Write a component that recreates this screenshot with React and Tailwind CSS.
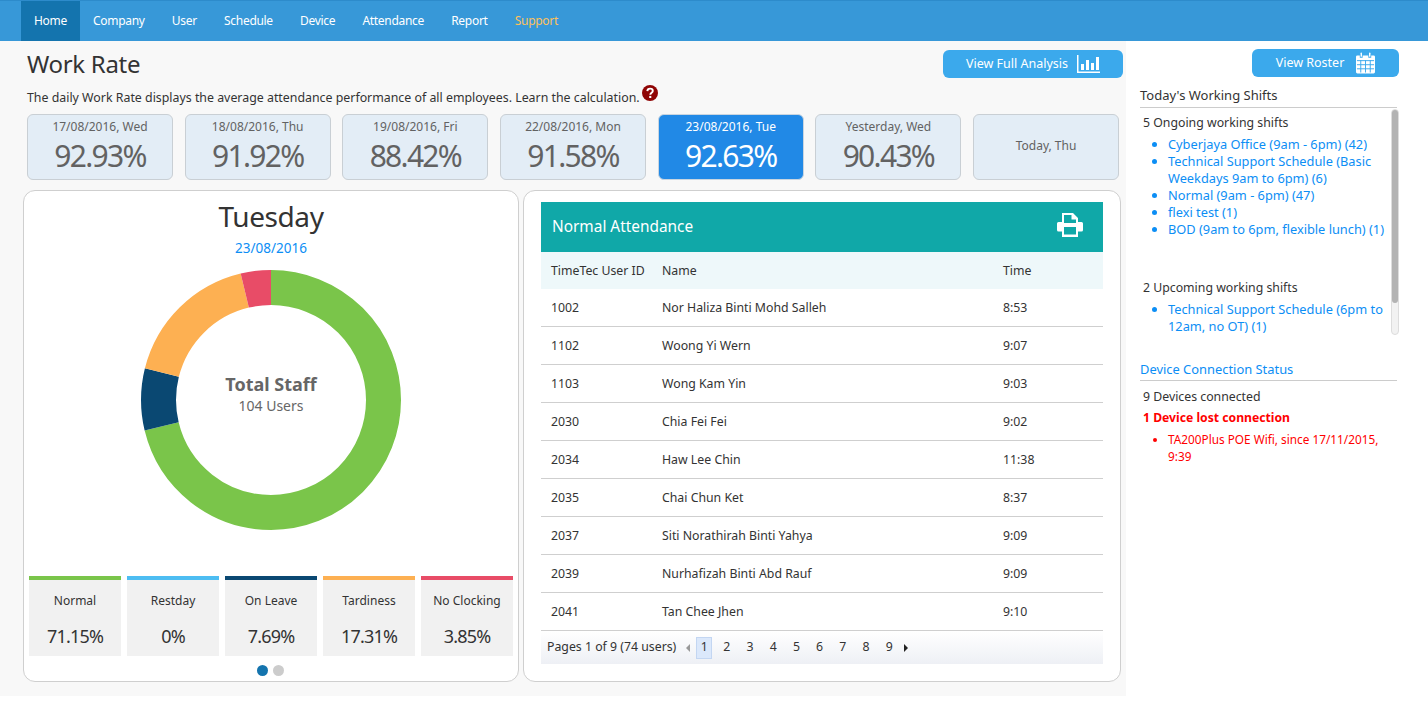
const navItems = ["Company", "User", "Schedule", "Device", "Attendance", "Report"];

const days = [
  { date: "17/08/2016, Wed", rate: "92.93%" },
  { date: "18/08/2016, Thu", rate: "91.92%" },
  { date: "19/08/2016, Fri", rate: "88.42%" },
  { date: "22/08/2016, Mon", rate: "91.58%" },
  { date: "23/08/2016, Tue", rate: "92.63%", active: true },
  { date: "Yesterday, Wed", rate: "90.43%" },
  { date: "Today, Thu" },
];

const legend = [
  { name: "Normal", value: 71.15, bar: "bg-[#7ac54a]", color: "#7ac54a" },
  { name: "Restday", value: 0, bar: "bg-[#4dbdf2]", color: "#4dbdf2" },
  { name: "On Leave", value: 7.69, bar: "bg-[#0a4872]", color: "#0a4872" },
  { name: "Tardiness", value: 17.31, bar: "bg-[#fdb052]", color: "#fdb052" },
  { name: "No Clocking", value: 3.85, bar: "bg-[#e84c67]", color: "#e84c67" },
];

const rows = [
  ["1002", "Nor Haliza Binti Mohd Salleh", "8:53"],
  ["1102", "Woong Yi Wern", "9:07"],
  ["1103", "Wong Kam Yin", "9:03"],
  ["2030", "Chia Fei Fei", "9:02"],
  ["2034", "Haw Lee Chin", "11:38"],
  ["2035", "Chai Chun Ket", "8:37"],
  ["2037", "Siti Norathirah Binti Yahya", "9:09"],
  ["2039", "Nurhafizah Binti Abd Rauf", "9:09"],
  ["2041", "Tan Chee Jhen", "9:10"],
];

function BarChartIcon() {
  return (
    <svg width="23" height="18" viewBox="0 0 23 18" fill="white">
      <rect x="0" y="0" width="1.500" height="18" />
      <rect x="0" y="16.500" width="23" height="1.500" />
      <rect x="4" y="9" width="3" height="6" />
      <rect x="9" y="5" width="3" height="10" />
      <rect x="14" y="8" width="3" height="7" />
      <rect x="19" y="2" width="3" height="13" />
    </svg>
  );
}

function CalendarIcon() {
  return (
    <svg width="19" height="22" viewBox="0 0 20 22" fill="white">
      <path d="M1.500 3H4v2.500h3V3h6v2.500h3V3h2.500A1.500 1.500 0 0 1 20 4.500V20.500A1.500 1.500 0 0 1 18.500 22H1.500A1.500 1.500 0 0 1 0 20.500V4.500A1.500 1.500 0 0 1 1.500 3Z" />
      <rect x="4.800" y="0" width="1.500" height="4.500" rx="0.700" />
      <rect x="13.700" y="0" width="1.500" height="4.500" rx="0.700" />
      <path
        d="M1 8.500H19M1 12.800H19M1 17.100H19M5 8V21M10 8V21M15 8V21"
        stroke="#3ba9ec"
        strokeWidth="1"
        fill="none"
      />
    </svg>
  );
}

function PrintIcon() {
  return (
    <svg width="26" height="24" viewBox="0 0 26 24" fill="white" className="-mt-[3px]">
      <path
        fillRule="evenodd"
        d="M5 0H16L21 5V9H24.500A1.500 1.500 0 0 1 26 10.500V17A1.500 1.500 0 0 1 24.500 18.500H21V24H5V18.500H1.500A1.500 1.500 0 0 1 0 17V10.500A1.500 1.500 0 0 1 1.500 9H5ZM7 2V10H19V6.500H14.500V2ZM7 14V21.500H19V14Z"
      />
    </svg>
  );
}

function HelpIcon() {
  return (
    <svg width="16" height="16" viewBox="0 0 16 16" className="ml-[2px] -mt-[10px] shrink-0">
      <circle cx="8" cy="8" r="8" fill="#8f0505" />
      <path
        d="M5.300 6.100C5.400 4.500 6.500 3.600 8.100 3.600C9.700 3.600 10.800 4.500 10.800 5.900C10.800 7.800 8.300 7.800 8.300 9.800"
        fill="none"
        stroke="white"
        strokeWidth="1.900"
      />
      <rect x="7.200" y="10.900" width="2.100" height="2.100" fill="white" />
    </svg>
  );
}

function Donut() {
  const r = 112.5;
  const c = 2 * Math.PI * r;
  let offset = 0;
  return (
    <svg width="260" height="260" viewBox="0 0 260 260" className="-rotate-90">
      {legend.map((s) => {
        const len = (s.value / 100) * c;
        const seg = (
          <circle
            key={s.name}
            cx="130"
            cy="130"
            r={r}
            fill="none"
            stroke={s.color}
            strokeWidth="35"
            strokeDasharray={`${len} ${c - len}`}
            strokeDashoffset={-offset}
          />
        );
        offset += len;
        return seg;
      })}
    </svg>
  );
}

function Nav() {
  return (
    <nav className="h-[41px] bg-[#3798d8] border-t border-[#2d8bcb] pl-[21px] flex items-stretch text-white text-[12px] tracking-[-0.300px]">
      <a className="w-[59px] flex items-center justify-center bg-[#1474ae]">Home</a>
      <div className="flex items-center gap-[27.200px] pl-[13px]">
        {navItems.map((item) => (
          <a key={item}>{item}</a>
        ))}
        <a className="text-[#fdc15c]">Support</a>
      </div>
    </nav>
  );
}

function DayCard({ date, rate, active }) {
  return (
    <div
      className={
        active
          ? "flex-1 h-[66px] pt-[2px] rounded-md border border-[#c9d5e0] bg-[#2189e6] text-white flex flex-col items-center justify-center"
          : rate
            ? "flex-1 h-[66px] pt-[2px] rounded-md border border-[#c9cfd4] bg-[#e3edf6] text-[#626262] flex flex-col items-center justify-center"
            : "flex-1 h-[66px] pb-[3px] rounded-md border border-[#c9cfd4] bg-[#e3edf6] text-[#626262] flex flex-col items-center justify-center"
      }
    >
      <div className="text-[12px] leading-[16px]">{date}</div>
      {rate && <div className="text-[30px] leading-[42px] tracking-[-1.700px]">{rate}</div>}
    </div>
  );
}

function WorkRatePanel() {
  return (
    <section className="w-[496px] h-[492px] bg-white border border-[#cfcfcf] rounded-xl flex flex-col items-center">
      <h2 className="text-[28px] leading-[36px] mt-[7px] tracking-[-0.400px] text-[#333]">Tuesday</h2>
      <div className="text-[13.500px] leading-[18px] mt-[5px] text-[#0c8ef5]">23/08/2016</div>
      <div className="relative mt-[13px] w-[260px] h-[260px]">
        <Donut />
        <div className="absolute inset-0 pb-[12px] flex flex-col items-center justify-center text-[#666]">
          <div className="text-[18px] leading-[24px] font-bold">Total Staff</div>
          <div className="text-[14px] leading-[20px]">104 Users</div>
        </div>
      </div>
      <div className="mt-[46px] w-full px-[5px] flex gap-[6px]">
        {legend.map((s) => (
          <div key={s.name} className="flex-1 h-[80px] bg-[#f1f1f1] text-center text-[#333]">
            <div className={`h-[4px] ${s.bar}`} />
            <div className="text-[12px] leading-[16px] mt-[13px]">{s.name}</div>
            <div className="text-[18px] leading-[24px] mt-[15px] tracking-[-0.800px]">{s.value}%</div>
          </div>
        ))}
      </div>
      <div className="mt-[9px] -ml-[1px] flex gap-[5px]">
        <span className="w-[11px] h-[11px] rounded-full bg-[#1474ae]" />
        <span className="w-[11px] h-[11px] rounded-full bg-[#cccccc]" />
      </div>
    </section>
  );
}

function AttendancePanel() {
  return (
    <section className="w-[598px] h-[492px] bg-white border border-[#cfcfcf] rounded-xl pt-[11px] px-[17px]">
      <div className="h-[50px] pb-[1px] bg-[#10a8a8] text-white pl-[11px] pr-[20px] flex items-center justify-between">
        <span className="text-[15.400px]">Normal Attendance</span>
        <PrintIcon />
      </div>
      <div className="h-[37px] pt-[2px] bg-[#eef8fa] flex items-center text-[12.300px] text-[#333]">
        <div className="w-[121px] pl-[10px]">TimeTec User ID</div>
        <div className="w-[341px]">Name</div>
        <div>Time</div>
      </div>
      {rows.map(([id, name, time]) => (
        <div key={id} className="h-[38px] pt-[2px] border-b border-[#cfcfcf] flex items-center text-[12.300px] text-[#333]">
          <div className="w-[121px] pl-[10px]">{id}</div>
          <div className="w-[341px]">{name}</div>
          <div>{time}</div>
        </div>
      ))}
      <div className="h-[33px] bg-gradient-to-b from-white to-[#eef0f5] flex items-center pl-[6px] text-[12.300px] text-[#333]">
        <span>Pages 1 of 9 (74 users)</span>
        <span className="ml-[10px] w-0 h-0 border-y-[4px] border-y-transparent border-r-[4px] border-r-[#999]" />
        <span className="ml-[6px] w-[16px] h-[22px] bg-[#dbe8fb] border border-[#c3d6f2] flex items-center justify-center">1</span>
        <div className="flex ml-[3px]">
          {["2", "3", "4", "5", "6", "7", "8", "9"].map((n) => (
            <span key={n} className="w-[23.200px] text-center">{n}</span>
          ))}
        </div>
        <span className="ml-[3px] w-0 h-0 border-y-[4px] border-y-transparent border-l-[4px] border-l-[#222]" />
      </div>
    </section>
  );
}

function ShiftLink({ children }) {
  return <li className="text-[12.800px] text-[#0c8ef5] marker:text-[#0c8ef5]">{children}</li>;
}

function Sidebar() {
  return (
    <aside className="flex-1 mt-[5px] h-[650px] bg-white pl-[14px] pr-[29px] pt-[3px] text-[12.300px]">
      <div className="flex justify-end">
        <button className="w-[147px] h-[28px] rounded-md bg-[#3ba9ec] text-white text-[12.500px] flex items-center justify-center gap-[12px]">
          View Roster
          <CalendarIcon />
        </button>
      </div>
      <h3 className="mt-[9px] mr-[2px] text-[13px] leading-[18px] text-[#333] border-b border-[#cccccc] pb-[3px]">
        Today's Working Shifts
      </h3>
      <div className="flex h-[226px] mt-[1px]">
        <div className="flex-1 pl-[3px] pr-[1px] leading-[17px] text-[#333]">
          <p className="mt-[5px]">5 Ongoing working shifts</p>
          <ul className="list-disc pl-[25px] mt-[5px]">
            <ShiftLink>Cyberjaya Office (9am - 6pm) (42)</ShiftLink>
            <ShiftLink>Technical Support Schedule (Basic Weekdays 9am to 6pm) (6)</ShiftLink>
            <ShiftLink>Normal (9am - 6pm) (47)</ShiftLink>
            <ShiftLink>flexi test (1)</ShiftLink>
            <ShiftLink>BOD (9am to 6pm, flexible lunch) (1)</ShiftLink>
          </ul>
          <p className="mt-[41px]">2 Upcoming working shifts</p>
          <ul className="list-disc pl-[25px] mt-[5px]">
            <ShiftLink>Technical Support Schedule (6pm to 12am, no OT) (1)</ShiftLink>
          </ul>
        </div>
        <div className="w-[8px] rounded bg-[#f2f2f2] border border-[#dddddd]">
          <div className="h-[193px] rounded bg-[#b3b3b3]" />
        </div>
      </div>
      <h3 className="mt-[25px] mr-[2px] text-[12.900px] leading-[18px] text-[#0c8ef5] border-b border-[#cccccc] pb-[2px]">
        Device Connection Status
      </h3>
      <p className="mt-[7px] pl-[3px] leading-[17px] text-[#333]">9 Devices connected</p>
      <p className="mt-[4px] pl-[3px] leading-[17px] font-bold text-[#ff0000] text-[12.200px]">1 Device lost connection</p>
      <ul className="list-disc pl-[28px] mt-[5px] leading-[17px] text-[#ff0000] text-[11.800px]">
        <li>TA200Plus POE Wifi, since 17/11/2015, 9:39</li>
      </ul>
    </aside>
  );
}

export default function App() {
  return (
    <div className="min-h-[704px] bg-white font-['Noto_Sans',sans-serif]">
      <Nav />
      <div className="flex">
        <main className="w-[1126px] h-[655px] bg-[#f8f8f8] pt-[7px]">
          <div className="pl-[27px] pr-[3px] flex items-start justify-between">
            <h1 className="text-[24px] leading-[32px] tracking-[-0.300px] text-[#333]">Work Rate</h1>
            <button className="w-[180px] h-[28px] mt-[2px] rounded-md bg-[#3ba9ec] text-white text-[12.500px] flex items-center justify-center gap-[9px]">
              View Full Analysis
              <BarChartIcon />
            </button>
          </div>
          <p className="pl-[27px] mt-[9px] text-[12.360px] leading-[18px] text-[#333] flex items-center">
            The daily Work Rate displays the average attendance performance of all employees. Learn the calculation.
            <HelpIcon />
          </p>
          <div className="ml-[27px] w-[1092px] mt-[7px] flex gap-[11.670px]">
            {days.map((d) => (
              <DayCard key={d.date} {...d} />
            ))}
          </div>
          <div className="ml-[23px] mt-[10px] flex gap-[4px]">
            <WorkRatePanel />
            <AttendancePanel />
          </div>
        </main>
        <Sidebar />
      </div>
    </div>
  );
}
